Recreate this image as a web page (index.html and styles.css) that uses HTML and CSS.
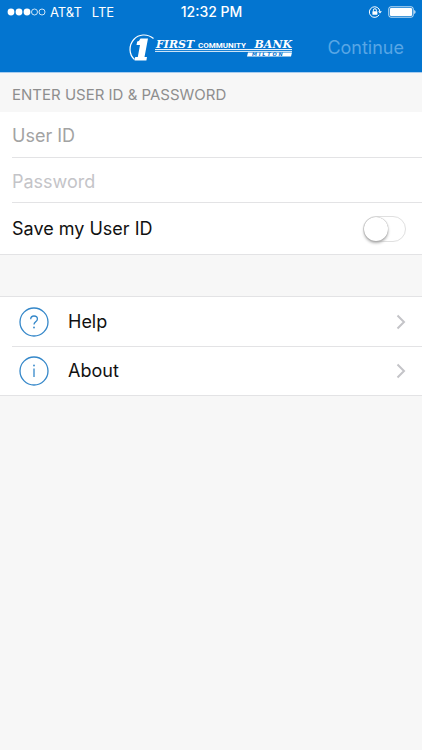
FILE: index.html
```html
<!DOCTYPE html>
<html lang="en">
<head>
<meta charset="utf-8">
<meta name="viewport" content="width=device-width, initial-scale=1">
<title>First Community Bank</title>
<link rel="stylesheet" href="styles.css">
</head>
<body>
<header class="top">
  <div class="status">
    <div class="carrier">
      <svg width="39" height="8" viewBox="0 0 39 8" aria-hidden="true">
        <g fill="#fff"><circle cx="4" cy="4" r="3.4"/><circle cx="12" cy="4" r="3.4"/><circle cx="20" cy="4" r="3.4"/></g>
        <g fill="none" stroke="#fff" stroke-width=".8"><circle cx="27.500" cy="4" r="3"/><circle cx="35" cy="4" r="3"/></g>
      </svg>
      <span>AT&amp;T</span>
      <span class="network">LTE</span>
    </div>
    <time class="clock">12:32 PM</time>
    <div class="indicators">
      <svg width="14" height="14" viewBox="0 0 14 14" fill="none" stroke="#fff" aria-hidden="true">
        <path d="M11.200 9.800A5.300 5.300 0 1 1 11.900 6.300"/>
        <path d="M10 6.200h3.900L12 8.600z" fill="#fff" stroke="none"/>
        <path d="M5.400 6.500V5.200a1.500 1.500 0 0 1 3 0v1.300"/>
        <rect x="4.400" y="6.200" width="5" height="3.600" rx=".5" fill="#fff" stroke="none"/>
      </svg>
      <svg width="28" height="12" viewBox="0 0 28 12" aria-hidden="true">
        <rect x=".8" y=".8" width="24.400" height="10.400" rx="2" fill="none" stroke="#fff" stroke-width=".8"/>
        <rect x="2" y="2" width="22" height="8" rx="1" fill="#fff"/>
        <path d="M26.300 4q1.200.5 1.200 2t-1.200 2z" fill="#fff"/>
      </svg>
    </div>
  </div>
  <nav class="bar">
    <svg class="logo" width="164" height="28" viewBox="0 0 164 28" role="img" aria-label="First Community Bank Milton">
      <path d="M24.500 4.500C18-.8 9.500.2 4.800 5.500-.5 11.500-.2 20.500 5.500 25.500" fill="none" stroke="#fff" stroke-width="1.200"/>
      <path d="M11.500 4.500H19L15.500 23H18L17.400 26.500H5.500L6.200 23H8.800L11 11H7.500L8.200 7.500Q10.600 7 11.500 4.500Z" fill="#fff"/>
      <text class="logo-wide" x="27" y="14">FIRST</text>
      <text class="logo-narrow" x="69" y="14">COMMUNITY</text>
      <text class="logo-wide" x="163" y="14" text-anchor="end">BANK</text>
      <path d="M26 15.500H163M26 17.400H163" stroke="#fff" stroke-width=".9"/>
      <path d="M119 18.500H163L162 22.500H118Z" fill="#fff"/>
      <text class="logo-town" x="123" y="22">M I L T O N</text>
    </svg>
    <button class="continue" type="submit" form="login" disabled>Continue</button>
  </nav>
</header>
<main>
  <form id="login">
    <h1 class="heading">ENTER USER ID &amp; PASSWORD</h1>
    <div class="group">
      <div class="row"><input class="field user" type="text" placeholder="User ID" aria-label="User ID"></div>
      <div class="row"><input class="field" type="password" placeholder="Password" aria-label="Password"></div>
      <div class="row save">
        <label for="save">Save my User ID</label>
        <input class="switch" id="save" type="checkbox" role="switch">
      </div>
    </div>
  </form>
  <nav class="group links">
    <a class="row link" href="#help">
      <svg width="30" height="30" viewBox="0 0 30 30" fill="none" stroke="#3487c9" aria-hidden="true">
        <circle cx="15" cy="15" r="14" stroke-width="1.300"/>
        <path d="M11.700 12.200C11.700 10 13 9 15 9s3.400 1.200 3.400 3c0 2.800-3.400 2.900-3.400 5.600" stroke-width="1.300"/>
        <circle cx="15" cy="20.500" r=".9" fill="#3487c9" stroke="none"/>
      </svg>
      <span>Help</span>
      <svg class="chevron" width="10" height="16" viewBox="0 0 10 16" aria-hidden="true"><path d="M1.500 1.500 8 8l-6.500 6.500"/></svg>
    </a>
    <a class="row link" href="#about">
      <svg width="30" height="30" viewBox="0 0 30 30" fill="none" stroke="#3487c9" aria-hidden="true">
        <circle cx="15" cy="15" r="14" stroke-width="1.300"/>
        <path d="M15 12.500V21" stroke-width="1.300"/>
        <circle cx="15" cy="9.500" r=".9" fill="#3487c9" stroke="none"/>
      </svg>
      <span>About</span>
      <svg class="chevron" width="10" height="16" viewBox="0 0 10 16" aria-hidden="true"><path d="M1.500 1.500 8 8l-6.500 6.500"/></svg>
    </a>
  </nav>
</main>
</body>
</html>
```
FILE: styles.css
```css
* { box-sizing: border-box; }

body {
  margin: 0;
  background: #f7f7f7;
  color: #111;
  font: 18px/24px Inter, "Liberation Sans", sans-serif;
}

.top {
  background: #0375d0;
  color: #fff;
  border-bottom: 1px solid #a9cdef;
}

.status {
  display: grid;
  grid-template-columns: 1fr auto 1fr;
  align-items: center;
  height: 24px;
  padding: 0 6px 0 7px;
  font-size: 13px;
}

.carrier, .indicators {
  display: flex;
  align-items: center;
  gap: 4px;
}

.network { margin-left: 6px; }
.clock { font-size: 14px; font-weight: 500; }
.indicators { justify-content: flex-end; gap: 6px; }

.bar {
  display: grid;
  grid-template-columns: 1fr auto 1fr;
  align-items: center;
  height: 48px;
  padding: 0 18px;
}

.logo { grid-column: 2; }
.logo text { fill: #fff; }
.logo .logo-wide { font: italic bold 11px "DejaVu Serif", serif; }
.logo .logo-narrow { font: bold 8px Roboto, sans-serif; }
.logo .logo-town { fill: #0375d0; font: italic bold 5px "DejaVu Sans", sans-serif; }

.continue {
  justify-self: end;
  padding: 0;
  border: 0;
  background: none;
  color: #58a6e5;
  font: inherit;
}

.heading {
  margin: 0;
  padding: 10px 12px 5px;
  color: #8e8e8e;
  font-size: 15px;
  font-weight: 400;
  line-height: 24px;
}

.group {
  background: #fff;
  border-bottom: 1px solid #e3e3e5;
}

.row {
  display: flex;
  align-items: center;
  height: 45px;
  margin-left: 12px;
}

.row + .row { border-top: 1px solid #e3e3e5; }
.row.save { height: 52px; padding-right: 16px; justify-content: space-between; }

.field {
  width: 100%;
  padding: 3px 0 0;
  border: 0;
  outline: 0;
  background: none;
  color: #111;
  font: inherit;
}

.field::placeholder { color: #c4c4c8; opacity: 1; }
.user::placeholder { color: #a3a3a3; }

.switch {
  appearance: none;
  display: flex;
  width: 43px;
  height: 26px;
  margin: 0;
  border: 1px solid #e0e0e0;
  border-radius: 13px;
  background: #fff;
}

.switch::before {
  content: "";
  width: 24px;
  height: 24px;
  border-radius: 50%;
  background: #fff;
  box-shadow: 0 0 1px #888, 0 2px 3px #aaa;
}

.switch:checked { background: #4cd964; justify-content: flex-end; }

.links {
  margin-top: 41px;
  border-top: 1px solid #e3e3e5;
}

.row.link {
  height: 49px;
  gap: 19px;
  padding: 0 16px 0 7px;
  color: inherit;
  text-decoration: none;
}

.chevron {
  margin-left: auto;
  fill: none;
  stroke: #c4c4c8;
  stroke-width: 2px;
}
```
